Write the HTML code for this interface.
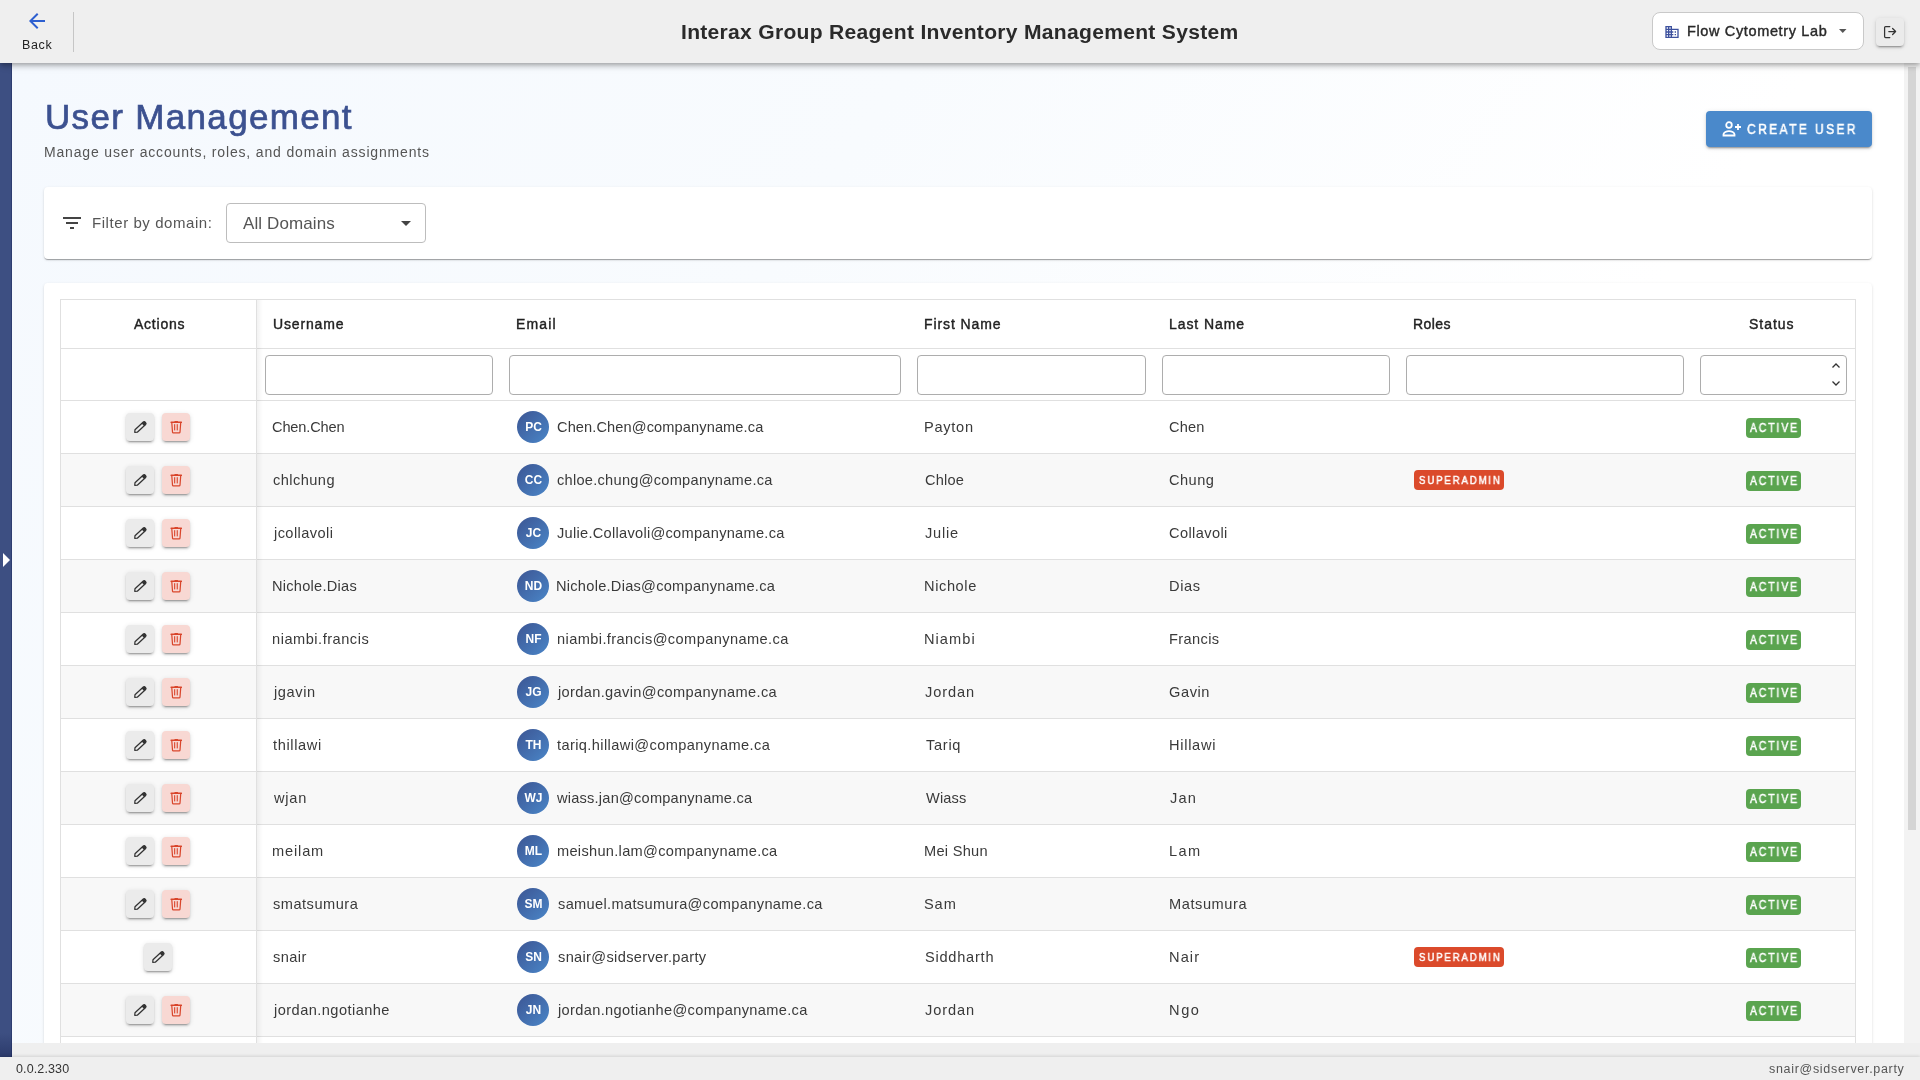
<!DOCTYPE html>
<html><head><meta charset="utf-8"><title>User Management</title>
<style>
*{box-sizing:border-box;margin:0;padding:0}
html,body{width:1920px;height:1080px;overflow:hidden;background:#efefef;font-family:"Liberation Sans",sans-serif;color:#333}
.a{position:absolute}
.t{white-space:nowrap;line-height:1;will-change:transform}
.hdr{left:0;top:0;width:1920px;height:63px;background:#efefef;box-shadow:0 2px 4px -1px rgba(0,0,0,.2),0 4px 5px 0 rgba(0,0,0,.14),0 1px 10px 0 rgba(0,0,0,.12);z-index:5}
.side{left:0;top:63px;width:12px;height:994px;background:linear-gradient(180deg,#3d4f82 0,#3d4f82 970px,#2c3b6c 994px);box-shadow:inset -1px 0 0 rgba(20,30,80,.35);z-index:4}
.content{left:12px;top:63px;width:1892px;height:980px;background:linear-gradient(125deg,#f5f9fe 0%,#f8fbfe 35%,#ffffff 70%,#ffffff 100%)}
.track{left:1904px;top:63px;width:16px;height:980px;background:#f3f3f3}
.thumb{left:1908px;top:67px;width:8px;height:763px;background:#d5d5d5;border-radius:0}
.footer{left:0;top:1057px;width:1920px;height:23px;background:#efefef;box-shadow:0 -1px 3px rgba(0,0,0,.12);z-index:6}
.card{background:#fff;border-radius:4px;box-shadow:0 2px 1px -1px rgba(0,0,0,.2),0 1px 1px 0 rgba(0,0,0,.14),0 1px 3px 0 rgba(0,0,0,.12)}
.hline{height:1px;background:#e0e0e0}
.vline{width:1px;background:#e0e0e0}
.inp{border:1px solid #adadad;border-radius:4px;background:#fff;height:40px;top:355px}
.btn{width:28px;height:28px;border-radius:4px;box-shadow:0 3px 1px -2px rgba(0,0,0,.2),0 2px 2px 0 rgba(0,0,0,.14),0 1px 5px 0 rgba(0,0,0,.12)}.btn>svg{position:absolute;left:0;top:0}
.edit{background:#ebebeb}
.del{background:#f8d8d3}
.av{width:32px;height:32px;border-radius:50%;background:linear-gradient(135deg,#3c5593 0%,#4a86c8 100%)}
.badge{height:20px;border-radius:4px}
.sa{background:#db4a2b;width:90px}
.ac{background:#5aa44f;width:55px}
</style></head><body>

<div class="a hdr">
<svg class="a" style="left:24.7px;top:9px" width="24" height="24" viewBox="0 0 24 24"><path fill="#2d5fd0" d="M20 11H7.83l5.59-5.59L12 4l-8 8 8 8 1.41-1.41L7.83 13H20v-2z"/></svg>
<div id="back" class="a t" style="left:21.76px;top:38.90px;font-size:12.5px;font-weight:normal;color:#222;letter-spacing:0.649px;">Back</div>
<div class="a" style="left:73px;top:12px;width:1px;height:40px;background:#c6c6c6"></div>
<div id="title" class="a t" style="left:681.28px;top:22.82px;font-size:19.5px;font-weight:bold;color:#2a2a2a;letter-spacing:0.274px;transform:scaleX(1.08);transform-origin:0 0">Interax Group Reagent Inventory Management System</div>
<div class="a" style="left:1652px;top:12px;width:212px;height:38px;background:#fff;border:1px solid #c9c9c9;border-radius:8px"></div>
<svg class="a" style="left:1664px;top:24px" width="16" height="16" viewBox="0 0 24 24"><path fill="#3d519e" d="M12 7V3H2v18h20V7H12zM6 19H4v-2h2v2zm0-4H4v-2h2v2zm0-4H4V9h2v2zm0-4H4V5h2v2zm4 12H8v-2h2v2zm0-4H8v-2h2v2zm0-4H8V9h2v2zm0-4H8V5h2v2zm10 12h-8v-2h2v-2h-2v-2h2v-2h-2V9h8v10zm-2-8h-2v2h2v-2zm0 4h-2v2h2v-2z"/></svg>
<div id="lab" class="a t" style="left:1687.18px;top:24.10px;font-size:14.5px;font-weight:normal;color:#2a2a2a;letter-spacing:0.638px;-webkit-text-stroke:.4px #2a2a2a">Flow Cytometry Lab</div>
<svg class="a" style="left:1839px;top:29px" width="8" height="5" viewBox="0 0 8 5"><path fill="#555" d="M0 0h7.5L3.75 4z"/></svg>
<div class="a btn edit" style="left:1876px;top:18px;background:#ebebeb"><svg width="28" height="28" viewBox="0 0 28 28"><path fill="none" stroke="#333" stroke-width="1.25" stroke-linecap="round" stroke-linejoin="round" d="M13.8 8.6H9.6Q8.6 8.6 8.6 9.6V18.6Q8.6 19.6 9.6 19.6H13.8M12.8 13.5H19.6M16.6 10.5L19.6 13.5L16.6 16.5"/></svg></div>
</div>
<div class="a side"><svg class="a" style="left:3px;top:490px" width="7" height="14" viewBox="0 0 7 14"><path fill="#fff" d="M0 0l7 7-7 7z"/></svg></div>
<div class="a content"></div>
<div class="a track"></div><div class="a thumb"></div>
<div id="h1" class="a t" style="left:44.65px;top:99.01px;font-size:35px;font-weight:normal;color:#3c5190;letter-spacing:1.329px;-webkit-text-stroke:.7px #3c5190">User Management</div>
<div id="sub" class="a t" style="left:44.30px;top:144.72px;font-size:14px;font-weight:normal;color:#555;letter-spacing:0.837px;">Manage user accounts, roles, and domain assignments</div>
<div class="a" style="left:1706px;top:111px;width:166px;height:36px;background:#4a89cb;border-radius:4px;box-shadow:0 3px 1px -2px rgba(0,0,0,.2),0 2px 2px 0 rgba(0,0,0,.14),0 1px 5px 0 rgba(0,0,0,.12)"></div>
<svg class="a" style="left:1721px;top:120px" width="22" height="18" viewBox="0 0 22 18"><circle cx="8" cy="5" r="2.8" fill="none" stroke="#fff" stroke-width="1.8"/><path d="M2.5 15.5v-1.2c0-1.8 3-3.2 5.5-3.2s5.5 1.4 5.5 3.2v1.2z" fill="none" stroke="#fff" stroke-width="1.8"/><path d="M17 4v6M14 7h6" stroke="#fff" stroke-width="1.8"/></svg>
<div id="create" class="a t" style="left:1746.57px;top:121.72px;font-size:14px;font-weight:normal;color:#fff;letter-spacing:2.767px;-webkit-text-stroke:.5px #fff;transform:scaleX(.86);transform-origin:0 0">CREATE USER</div>
<div class="a card" style="left:44px;top:187px;width:1828px;height:72px"></div>
<svg class="a" style="left:60px;top:211px" width="24" height="24" viewBox="0 0 24 24"><path fill="#444" d="M10 18h4v-2h-4v2zM3 6v2h18V6H3zm3 7h12v-2H6v2z"/></svg>
<div id="filt" class="a t" style="left:91.68px;top:214.91px;font-size:15px;font-weight:normal;color:#555;letter-spacing:0.563px;">Filter by domain:</div>
<div class="a" style="left:226px;top:203px;width:200px;height:40px;border:1px solid #bdbdbd;border-radius:4px;background:#fff"></div>
<div id="alld" class="a t" style="left:242.73px;top:214.81px;font-size:17px;font-weight:normal;color:#555;letter-spacing:0.101px;">All Domains</div>
<svg class="a" style="left:400.5px;top:221px" width="10" height="6" viewBox="0 0 10 6"><path fill="#444" d="M0 0h10L5 5z"/></svg>
<div class="a" style="left:0;top:0;width:1904px;height:1043px;overflow:hidden;z-index:1">
<div class="a card" style="left:44px;top:283px;width:1828px;height:800px"></div>
<div class="a" style="left:60px;top:299px;width:1796px;height:800px;border:1px solid #e0e0e0;border-bottom:none;background:#fff"></div>
<div class="a" style="left:61px;top:401px;width:1794px;height:52px;background:#fff"></div>
<div class="a" style="left:61px;top:454px;width:1794px;height:52px;background:#f8f8f8"></div>
<div class="a" style="left:61px;top:507px;width:1794px;height:52px;background:#fff"></div>
<div class="a" style="left:61px;top:560px;width:1794px;height:52px;background:#f8f8f8"></div>
<div class="a" style="left:61px;top:613px;width:1794px;height:52px;background:#fff"></div>
<div class="a" style="left:61px;top:666px;width:1794px;height:52px;background:#f8f8f8"></div>
<div class="a" style="left:61px;top:719px;width:1794px;height:52px;background:#fff"></div>
<div class="a" style="left:61px;top:772px;width:1794px;height:52px;background:#f8f8f8"></div>
<div class="a" style="left:61px;top:825px;width:1794px;height:52px;background:#fff"></div>
<div class="a" style="left:61px;top:878px;width:1794px;height:52px;background:#f8f8f8"></div>
<div class="a" style="left:61px;top:931px;width:1794px;height:52px;background:#fff"></div>
<div class="a" style="left:61px;top:984px;width:1794px;height:52px;background:#f8f8f8"></div>
<div class="a" style="left:61px;top:1037px;width:1794px;height:52px;background:#fff"></div>
<div class="a hline" style="left:60px;top:348px;width:1796px"></div>
<div class="a hline" style="left:60px;top:400px;width:1796px"></div>
<div class="a hline" style="left:60px;top:453px;width:1796px"></div>
<div class="a hline" style="left:60px;top:506px;width:1796px"></div>
<div class="a hline" style="left:60px;top:559px;width:1796px"></div>
<div class="a hline" style="left:60px;top:612px;width:1796px"></div>
<div class="a hline" style="left:60px;top:665px;width:1796px"></div>
<div class="a hline" style="left:60px;top:718px;width:1796px"></div>
<div class="a hline" style="left:60px;top:771px;width:1796px"></div>
<div class="a hline" style="left:60px;top:824px;width:1796px"></div>
<div class="a hline" style="left:60px;top:877px;width:1796px"></div>
<div class="a hline" style="left:60px;top:930px;width:1796px"></div>
<div class="a hline" style="left:60px;top:983px;width:1796px"></div>
<div class="a hline" style="left:60px;top:1036px;width:1796px"></div>
<div class="a hline" style="left:60px;top:1089px;width:1796px"></div>
<div class="a vline" style="left:256px;top:299px;height:800px"></div>
<div class="a" style="left:257px;top:300px;width:6px;height:800px;background:linear-gradient(90deg,rgba(0,0,0,.05),rgba(0,0,0,0))"></div>
<div id="hact" class="a t" style="left:133.83px;top:317.01px;font-size:14px;font-weight:normal;color:#222;letter-spacing:0.764px;-webkit-text-stroke:.4px #222">Actions</div>
<div id="huser" class="a t" style="left:272.69px;top:317.01px;font-size:14px;font-weight:normal;color:#222;letter-spacing:0.841px;-webkit-text-stroke:.4px #222">Username</div>
<div id="hemail" class="a t" style="left:516.05px;top:317.01px;font-size:14px;font-weight:normal;color:#222;letter-spacing:1.169px;-webkit-text-stroke:.4px #222">Email</div>
<div id="hfirst" class="a t" style="left:924.35px;top:317.01px;font-size:14px;font-weight:normal;color:#222;letter-spacing:0.904px;-webkit-text-stroke:.4px #222">First Name</div>
<div id="hlast" class="a t" style="left:1169.35px;top:317.01px;font-size:14px;font-weight:normal;color:#222;letter-spacing:0.927px;-webkit-text-stroke:.4px #222">Last Name</div>
<div id="hroles" class="a t" style="left:1413.43px;top:317.01px;font-size:14px;font-weight:normal;color:#222;letter-spacing:0.430px;-webkit-text-stroke:.4px #222">Roles</div>
<div id="hstatus" class="a t" style="left:1749.41px;top:317.01px;font-size:14px;font-weight:normal;color:#222;letter-spacing:0.965px;-webkit-text-stroke:.4px #222">Status</div>
<div class="a inp" style="left:265px;width:228px"></div>
<div class="a inp" style="left:509px;width:392px"></div>
<div class="a inp" style="left:917px;width:229px"></div>
<div class="a inp" style="left:1162px;width:228px"></div>
<div class="a inp" style="left:1406px;width:278px"></div>
<div class="a inp" style="left:1700px;width:147px"></div>
<svg class="a" style="left:1830px;top:359px" width="12" height="32" viewBox="0 0 12 32"><path d="M2.5 8.5l3.5-3.5 3.5 3.5M2.5 22.5l3.5 3.5 3.5-3.5" fill="none" stroke="#333" stroke-width="1.3"/></svg>
<div class="a btn edit" style="left:126px;top:413px"><svg width="28" height="28" viewBox="0 0 28 28"><g transform="translate(8.6,19.4) rotate(-43)"><path d="M0.2 0 L2.1 -1.7 H13.5 Q14.8 -1.7 14.8 0 Q14.8 1.7 13.5 1.7 H2.1 Z" fill="none" stroke="#333" stroke-width="1.25" stroke-linejoin="round"/><path d="M11.3 -1.7 H13.5 Q14.8 -1.7 14.8 0 Q14.8 1.7 13.5 1.7 H11.3 Z" fill="#333"/></g></svg></div>
<div class="a btn del" style="left:162px;top:413px"><svg width="28" height="28" viewBox="0 0 28 28"><rect x="8.5" y="8.5" width="11.5" height="1.6" rx=".4" fill="#d9452b"/><rect x="12.4" y="7.9" width="3.7" height="1.1" rx=".4" fill="#d9452b"/><path d="M9.8 9.9 L10.5 19.1 Q10.6 19.8 11.3 19.8 H17.2 Q17.9 19.8 18 19.1 L18.7 9.9" fill="none" stroke="#d9452b" stroke-width="1.2"/><rect x="12.1" y="11.2" width="1.1" height="6.2" fill="#d9452b"/><rect x="14.7" y="11.2" width="1.1" height="6.2" fill="#d9452b"/></svg></div>
<div id="u0" class="a t" style="left:272.42px;top:420.01px;font-size:14.6px;font-weight:normal;color:#3a3a3a;letter-spacing:-0.156px;">Chen.Chen</div>
<div class="a av" style="left:517px;top:411px"></div>
<div class="a t" style="left:517px;top:420.70px;width:32px;text-align:center;font-size:12px;font-weight:bold;color:#fff;letter-spacing:0;text-indent:1px">PC</div>
<div id="e0" class="a t" style="left:557.15px;top:420.01px;font-size:14.6px;font-weight:normal;color:#3a3a3a;letter-spacing:0.106px;">Chen.Chen@companyname.ca</div>
<div id="f0" class="a t" style="left:924.01px;top:420.01px;font-size:14.6px;font-weight:normal;color:#3a3a3a;letter-spacing:0.716px;">Payton</div>
<div id="l0" class="a t" style="left:1169.02px;top:420.01px;font-size:14.6px;font-weight:normal;color:#3a3a3a;letter-spacing:0.190px;">Chen</div>
<div class="a badge ac" style="left:1746px;top:418px"></div>
<div id="a0" class="a t" style="left:1749.77px;top:422.00px;font-size:12px;font-weight:normal;color:#fff;letter-spacing:2.278px;-webkit-text-stroke:.5px #fff;transform:scaleX(.86);transform-origin:0 0">ACTIVE</div>
<div class="a btn edit" style="left:126px;top:466px"><svg width="28" height="28" viewBox="0 0 28 28"><g transform="translate(8.6,19.4) rotate(-43)"><path d="M0.2 0 L2.1 -1.7 H13.5 Q14.8 -1.7 14.8 0 Q14.8 1.7 13.5 1.7 H2.1 Z" fill="none" stroke="#333" stroke-width="1.25" stroke-linejoin="round"/><path d="M11.3 -1.7 H13.5 Q14.8 -1.7 14.8 0 Q14.8 1.7 13.5 1.7 H11.3 Z" fill="#333"/></g></svg></div>
<div class="a btn del" style="left:162px;top:466px"><svg width="28" height="28" viewBox="0 0 28 28"><rect x="8.5" y="8.5" width="11.5" height="1.6" rx=".4" fill="#d9452b"/><rect x="12.4" y="7.9" width="3.7" height="1.1" rx=".4" fill="#d9452b"/><path d="M9.8 9.9 L10.5 19.1 Q10.6 19.8 11.3 19.8 H17.2 Q17.9 19.8 18 19.1 L18.7 9.9" fill="none" stroke="#d9452b" stroke-width="1.2"/><rect x="12.1" y="11.2" width="1.1" height="6.2" fill="#d9452b"/><rect x="14.7" y="11.2" width="1.1" height="6.2" fill="#d9452b"/></svg></div>
<div id="u1" class="a t" style="left:273.05px;top:473.01px;font-size:14.6px;font-weight:normal;color:#3a3a3a;letter-spacing:0.447px;">chlchung</div>
<div class="a av" style="left:517px;top:464px"></div>
<div class="a t" style="left:517px;top:473.70px;width:32px;text-align:center;font-size:12px;font-weight:bold;color:#fff;letter-spacing:0;text-indent:1px">CC</div>
<div id="e1" class="a t" style="left:557.49px;top:473.01px;font-size:14.6px;font-weight:normal;color:#3a3a3a;letter-spacing:0.269px;">chloe.chung@companyname.ca</div>
<div id="f1" class="a t" style="left:924.74px;top:473.01px;font-size:14.6px;font-weight:normal;color:#3a3a3a;letter-spacing:0.213px;">Chloe</div>
<div id="l1" class="a t" style="left:1169.03px;top:473.01px;font-size:14.6px;font-weight:normal;color:#3a3a3a;letter-spacing:0.469px;">Chung</div>
<div class="a badge sa" style="left:1414px;top:470px"></div>
<div id="s1" class="a t" style="left:1418.52px;top:475.01px;font-size:11px;font-weight:normal;color:#fff;letter-spacing:2.066px;-webkit-text-stroke:.5px #fff;transform:scaleX(.88);transform-origin:0 0">SUPERADMIN</div>
<div class="a badge ac" style="left:1746px;top:471px"></div>
<div id="a1" class="a t" style="left:1749.77px;top:475.00px;font-size:12px;font-weight:normal;color:#fff;letter-spacing:2.278px;-webkit-text-stroke:.5px #fff;transform:scaleX(.86);transform-origin:0 0">ACTIVE</div>
<div class="a btn edit" style="left:126px;top:519px"><svg width="28" height="28" viewBox="0 0 28 28"><g transform="translate(8.6,19.4) rotate(-43)"><path d="M0.2 0 L2.1 -1.7 H13.5 Q14.8 -1.7 14.8 0 Q14.8 1.7 13.5 1.7 H2.1 Z" fill="none" stroke="#333" stroke-width="1.25" stroke-linejoin="round"/><path d="M11.3 -1.7 H13.5 Q14.8 -1.7 14.8 0 Q14.8 1.7 13.5 1.7 H11.3 Z" fill="#333"/></g></svg></div>
<div class="a btn del" style="left:162px;top:519px"><svg width="28" height="28" viewBox="0 0 28 28"><rect x="8.5" y="8.5" width="11.5" height="1.6" rx=".4" fill="#d9452b"/><rect x="12.4" y="7.9" width="3.7" height="1.1" rx=".4" fill="#d9452b"/><path d="M9.8 9.9 L10.5 19.1 Q10.6 19.8 11.3 19.8 H17.2 Q17.9 19.8 18 19.1 L18.7 9.9" fill="none" stroke="#d9452b" stroke-width="1.2"/><rect x="12.1" y="11.2" width="1.1" height="6.2" fill="#d9452b"/><rect x="14.7" y="11.2" width="1.1" height="6.2" fill="#d9452b"/></svg></div>
<div id="u2" class="a t" style="left:274.02px;top:526.01px;font-size:14.6px;font-weight:normal;color:#3a3a3a;letter-spacing:0.414px;">jcollavoli</div>
<div class="a av" style="left:517px;top:517px"></div>
<div class="a t" style="left:517px;top:526.70px;width:32px;text-align:center;font-size:12px;font-weight:bold;color:#fff;letter-spacing:0;text-indent:1px">JC</div>
<div id="e2" class="a t" style="left:557.31px;top:526.01px;font-size:14.6px;font-weight:normal;color:#3a3a3a;letter-spacing:0.281px;">Julie.Collavoli@companyname.ca</div>
<div id="f2" class="a t" style="left:924.84px;top:526.01px;font-size:14.6px;font-weight:normal;color:#3a3a3a;letter-spacing:0.773px;">Julie</div>
<div id="l2" class="a t" style="left:1169.02px;top:526.01px;font-size:14.6px;font-weight:normal;color:#3a3a3a;letter-spacing:0.388px;">Collavoli</div>
<div class="a badge ac" style="left:1746px;top:524px"></div>
<div id="a2" class="a t" style="left:1749.77px;top:528.00px;font-size:12px;font-weight:normal;color:#fff;letter-spacing:2.278px;-webkit-text-stroke:.5px #fff;transform:scaleX(.86);transform-origin:0 0">ACTIVE</div>
<div class="a btn edit" style="left:126px;top:572px"><svg width="28" height="28" viewBox="0 0 28 28"><g transform="translate(8.6,19.4) rotate(-43)"><path d="M0.2 0 L2.1 -1.7 H13.5 Q14.8 -1.7 14.8 0 Q14.8 1.7 13.5 1.7 H2.1 Z" fill="none" stroke="#333" stroke-width="1.25" stroke-linejoin="round"/><path d="M11.3 -1.7 H13.5 Q14.8 -1.7 14.8 0 Q14.8 1.7 13.5 1.7 H11.3 Z" fill="#333"/></g></svg></div>
<div class="a btn del" style="left:162px;top:572px"><svg width="28" height="28" viewBox="0 0 28 28"><rect x="8.5" y="8.5" width="11.5" height="1.6" rx=".4" fill="#d9452b"/><rect x="12.4" y="7.9" width="3.7" height="1.1" rx=".4" fill="#d9452b"/><path d="M9.8 9.9 L10.5 19.1 Q10.6 19.8 11.3 19.8 H17.2 Q17.9 19.8 18 19.1 L18.7 9.9" fill="none" stroke="#d9452b" stroke-width="1.2"/><rect x="12.1" y="11.2" width="1.1" height="6.2" fill="#d9452b"/><rect x="14.7" y="11.2" width="1.1" height="6.2" fill="#d9452b"/></svg></div>
<div id="u3" class="a t" style="left:271.60px;top:579.01px;font-size:14.6px;font-weight:normal;color:#3a3a3a;letter-spacing:0.261px;">Nichole.Dias</div>
<div class="a av" style="left:517px;top:570px"></div>
<div class="a t" style="left:517px;top:579.70px;width:32px;text-align:center;font-size:12px;font-weight:bold;color:#fff;letter-spacing:0;text-indent:1px">ND</div>
<div id="e3" class="a t" style="left:556.22px;top:579.01px;font-size:14.6px;font-weight:normal;color:#3a3a3a;letter-spacing:0.265px;">Nichole.Dias@companyname.ca</div>
<div id="f3" class="a t" style="left:924.49px;top:579.01px;font-size:14.6px;font-weight:normal;color:#3a3a3a;letter-spacing:0.606px;">Nichole</div>
<div id="l3" class="a t" style="left:1169.17px;top:579.01px;font-size:14.6px;font-weight:normal;color:#3a3a3a;letter-spacing:0.600px;">Dias</div>
<div class="a badge ac" style="left:1746px;top:577px"></div>
<div id="a3" class="a t" style="left:1749.77px;top:581.00px;font-size:12px;font-weight:normal;color:#fff;letter-spacing:2.278px;-webkit-text-stroke:.5px #fff;transform:scaleX(.86);transform-origin:0 0">ACTIVE</div>
<div class="a btn edit" style="left:126px;top:625px"><svg width="28" height="28" viewBox="0 0 28 28"><g transform="translate(8.6,19.4) rotate(-43)"><path d="M0.2 0 L2.1 -1.7 H13.5 Q14.8 -1.7 14.8 0 Q14.8 1.7 13.5 1.7 H2.1 Z" fill="none" stroke="#333" stroke-width="1.25" stroke-linejoin="round"/><path d="M11.3 -1.7 H13.5 Q14.8 -1.7 14.8 0 Q14.8 1.7 13.5 1.7 H11.3 Z" fill="#333"/></g></svg></div>
<div class="a btn del" style="left:162px;top:625px"><svg width="28" height="28" viewBox="0 0 28 28"><rect x="8.5" y="8.5" width="11.5" height="1.6" rx=".4" fill="#d9452b"/><rect x="12.4" y="7.9" width="3.7" height="1.1" rx=".4" fill="#d9452b"/><path d="M9.8 9.9 L10.5 19.1 Q10.6 19.8 11.3 19.8 H17.2 Q17.9 19.8 18 19.1 L18.7 9.9" fill="none" stroke="#d9452b" stroke-width="1.2"/><rect x="12.1" y="11.2" width="1.1" height="6.2" fill="#d9452b"/><rect x="14.7" y="11.2" width="1.1" height="6.2" fill="#d9452b"/></svg></div>
<div id="u4" class="a t" style="left:272.23px;top:632.01px;font-size:14.6px;font-weight:normal;color:#3a3a3a;letter-spacing:0.512px;">niambi.francis</div>
<div class="a av" style="left:517px;top:623px"></div>
<div class="a t" style="left:517px;top:632.70px;width:32px;text-align:center;font-size:12px;font-weight:bold;color:#fff;letter-spacing:0;text-indent:1px">NF</div>
<div id="e4" class="a t" style="left:557.03px;top:632.01px;font-size:14.6px;font-weight:normal;color:#3a3a3a;letter-spacing:0.401px;">niambi.francis@companyname.ca</div>
<div id="f4" class="a t" style="left:924.01px;top:632.01px;font-size:14.6px;font-weight:normal;color:#3a3a3a;letter-spacing:1.043px;">Niambi</div>
<div id="l4" class="a t" style="left:1169.21px;top:632.01px;font-size:14.6px;font-weight:normal;color:#3a3a3a;letter-spacing:0.371px;">Francis</div>
<div class="a badge ac" style="left:1746px;top:630px"></div>
<div id="a4" class="a t" style="left:1749.77px;top:634.00px;font-size:12px;font-weight:normal;color:#fff;letter-spacing:2.278px;-webkit-text-stroke:.5px #fff;transform:scaleX(.86);transform-origin:0 0">ACTIVE</div>
<div class="a btn edit" style="left:126px;top:678px"><svg width="28" height="28" viewBox="0 0 28 28"><g transform="translate(8.6,19.4) rotate(-43)"><path d="M0.2 0 L2.1 -1.7 H13.5 Q14.8 -1.7 14.8 0 Q14.8 1.7 13.5 1.7 H2.1 Z" fill="none" stroke="#333" stroke-width="1.25" stroke-linejoin="round"/><path d="M11.3 -1.7 H13.5 Q14.8 -1.7 14.8 0 Q14.8 1.7 13.5 1.7 H11.3 Z" fill="#333"/></g></svg></div>
<div class="a btn del" style="left:162px;top:678px"><svg width="28" height="28" viewBox="0 0 28 28"><rect x="8.5" y="8.5" width="11.5" height="1.6" rx=".4" fill="#d9452b"/><rect x="12.4" y="7.9" width="3.7" height="1.1" rx=".4" fill="#d9452b"/><path d="M9.8 9.9 L10.5 19.1 Q10.6 19.8 11.3 19.8 H17.2 Q17.9 19.8 18 19.1 L18.7 9.9" fill="none" stroke="#d9452b" stroke-width="1.2"/><rect x="12.1" y="11.2" width="1.1" height="6.2" fill="#d9452b"/><rect x="14.7" y="11.2" width="1.1" height="6.2" fill="#d9452b"/></svg></div>
<div id="u5" class="a t" style="left:274.09px;top:685.01px;font-size:14.6px;font-weight:normal;color:#3a3a3a;letter-spacing:0.603px;">jgavin</div>
<div class="a av" style="left:517px;top:676px"></div>
<div class="a t" style="left:517px;top:685.70px;width:32px;text-align:center;font-size:12px;font-weight:bold;color:#fff;letter-spacing:0;text-indent:1px">JG</div>
<div id="e5" class="a t" style="left:557.71px;top:685.01px;font-size:14.6px;font-weight:normal;color:#3a3a3a;letter-spacing:0.353px;">jordan.gavin@companyname.ca</div>
<div id="f5" class="a t" style="left:924.80px;top:685.01px;font-size:14.6px;font-weight:normal;color:#3a3a3a;letter-spacing:0.899px;">Jordan</div>
<div id="l5" class="a t" style="left:1168.81px;top:685.01px;font-size:14.6px;font-weight:normal;color:#3a3a3a;letter-spacing:0.591px;">Gavin</div>
<div class="a badge ac" style="left:1746px;top:683px"></div>
<div id="a5" class="a t" style="left:1749.77px;top:687.00px;font-size:12px;font-weight:normal;color:#fff;letter-spacing:2.278px;-webkit-text-stroke:.5px #fff;transform:scaleX(.86);transform-origin:0 0">ACTIVE</div>
<div class="a btn edit" style="left:126px;top:731px"><svg width="28" height="28" viewBox="0 0 28 28"><g transform="translate(8.6,19.4) rotate(-43)"><path d="M0.2 0 L2.1 -1.7 H13.5 Q14.8 -1.7 14.8 0 Q14.8 1.7 13.5 1.7 H2.1 Z" fill="none" stroke="#333" stroke-width="1.25" stroke-linejoin="round"/><path d="M11.3 -1.7 H13.5 Q14.8 -1.7 14.8 0 Q14.8 1.7 13.5 1.7 H11.3 Z" fill="#333"/></g></svg></div>
<div class="a btn del" style="left:162px;top:731px"><svg width="28" height="28" viewBox="0 0 28 28"><rect x="8.5" y="8.5" width="11.5" height="1.6" rx=".4" fill="#d9452b"/><rect x="12.4" y="7.9" width="3.7" height="1.1" rx=".4" fill="#d9452b"/><path d="M9.8 9.9 L10.5 19.1 Q10.6 19.8 11.3 19.8 H17.2 Q17.9 19.8 18 19.1 L18.7 9.9" fill="none" stroke="#d9452b" stroke-width="1.2"/><rect x="12.1" y="11.2" width="1.1" height="6.2" fill="#d9452b"/><rect x="14.7" y="11.2" width="1.1" height="6.2" fill="#d9452b"/></svg></div>
<div id="u6" class="a t" style="left:273.17px;top:738.01px;font-size:14.6px;font-weight:normal;color:#3a3a3a;letter-spacing:0.635px;">thillawi</div>
<div class="a av" style="left:517px;top:729px"></div>
<div class="a t" style="left:517px;top:738.70px;width:32px;text-align:center;font-size:12px;font-weight:bold;color:#fff;letter-spacing:0;text-indent:1px">TH</div>
<div id="e6" class="a t" style="left:557.44px;top:738.01px;font-size:14.6px;font-weight:normal;color:#3a3a3a;letter-spacing:0.396px;">tariq.hillawi@companyname.ca</div>
<div id="f6" class="a t" style="left:925.74px;top:738.01px;font-size:14.6px;font-weight:normal;color:#3a3a3a;letter-spacing:0.714px;">Tariq</div>
<div id="l6" class="a t" style="left:1169.21px;top:738.01px;font-size:14.6px;font-weight:normal;color:#3a3a3a;letter-spacing:0.708px;">Hillawi</div>
<div class="a badge ac" style="left:1746px;top:736px"></div>
<div id="a6" class="a t" style="left:1749.77px;top:740.00px;font-size:12px;font-weight:normal;color:#fff;letter-spacing:2.278px;-webkit-text-stroke:.5px #fff;transform:scaleX(.86);transform-origin:0 0">ACTIVE</div>
<div class="a btn edit" style="left:126px;top:784px"><svg width="28" height="28" viewBox="0 0 28 28"><g transform="translate(8.6,19.4) rotate(-43)"><path d="M0.2 0 L2.1 -1.7 H13.5 Q14.8 -1.7 14.8 0 Q14.8 1.7 13.5 1.7 H2.1 Z" fill="none" stroke="#333" stroke-width="1.25" stroke-linejoin="round"/><path d="M11.3 -1.7 H13.5 Q14.8 -1.7 14.8 0 Q14.8 1.7 13.5 1.7 H11.3 Z" fill="#333"/></g></svg></div>
<div class="a btn del" style="left:162px;top:784px"><svg width="28" height="28" viewBox="0 0 28 28"><rect x="8.5" y="8.5" width="11.5" height="1.6" rx=".4" fill="#d9452b"/><rect x="12.4" y="7.9" width="3.7" height="1.1" rx=".4" fill="#d9452b"/><path d="M9.8 9.9 L10.5 19.1 Q10.6 19.8 11.3 19.8 H17.2 Q17.9 19.8 18 19.1 L18.7 9.9" fill="none" stroke="#d9452b" stroke-width="1.2"/><rect x="12.1" y="11.2" width="1.1" height="6.2" fill="#d9452b"/><rect x="14.7" y="11.2" width="1.1" height="6.2" fill="#d9452b"/></svg></div>
<div id="u7" class="a t" style="left:273.51px;top:791.01px;font-size:14.6px;font-weight:normal;color:#3a3a3a;letter-spacing:0.771px;">wjan</div>
<div class="a av" style="left:517px;top:782px"></div>
<div class="a t" style="left:517px;top:791.70px;width:32px;text-align:center;font-size:12px;font-weight:bold;color:#fff;letter-spacing:0;text-indent:1px">WJ</div>
<div id="e7" class="a t" style="left:557.24px;top:791.01px;font-size:14.6px;font-weight:normal;color:#3a3a3a;letter-spacing:0.220px;">wiass.jan@companyname.ca</div>
<div id="f7" class="a t" style="left:925.55px;top:791.01px;font-size:14.6px;font-weight:normal;color:#3a3a3a;letter-spacing:0.137px;">Wiass</div>
<div id="l7" class="a t" style="left:1169.98px;top:791.01px;font-size:14.6px;font-weight:normal;color:#3a3a3a;letter-spacing:1.152px;">Jan</div>
<div class="a badge ac" style="left:1746px;top:789px"></div>
<div id="a7" class="a t" style="left:1749.77px;top:793.00px;font-size:12px;font-weight:normal;color:#fff;letter-spacing:2.278px;-webkit-text-stroke:.5px #fff;transform:scaleX(.86);transform-origin:0 0">ACTIVE</div>
<div class="a btn edit" style="left:126px;top:837px"><svg width="28" height="28" viewBox="0 0 28 28"><g transform="translate(8.6,19.4) rotate(-43)"><path d="M0.2 0 L2.1 -1.7 H13.5 Q14.8 -1.7 14.8 0 Q14.8 1.7 13.5 1.7 H2.1 Z" fill="none" stroke="#333" stroke-width="1.25" stroke-linejoin="round"/><path d="M11.3 -1.7 H13.5 Q14.8 -1.7 14.8 0 Q14.8 1.7 13.5 1.7 H11.3 Z" fill="#333"/></g></svg></div>
<div class="a btn del" style="left:162px;top:837px"><svg width="28" height="28" viewBox="0 0 28 28"><rect x="8.5" y="8.5" width="11.5" height="1.6" rx=".4" fill="#d9452b"/><rect x="12.4" y="7.9" width="3.7" height="1.1" rx=".4" fill="#d9452b"/><path d="M9.8 9.9 L10.5 19.1 Q10.6 19.8 11.3 19.8 H17.2 Q17.9 19.8 18 19.1 L18.7 9.9" fill="none" stroke="#d9452b" stroke-width="1.2"/><rect x="12.1" y="11.2" width="1.1" height="6.2" fill="#d9452b"/><rect x="14.7" y="11.2" width="1.1" height="6.2" fill="#d9452b"/></svg></div>
<div id="u8" class="a t" style="left:272.23px;top:844.01px;font-size:14.6px;font-weight:normal;color:#3a3a3a;letter-spacing:0.844px;">meilam</div>
<div class="a av" style="left:517px;top:835px"></div>
<div class="a t" style="left:517px;top:844.70px;width:32px;text-align:center;font-size:12px;font-weight:bold;color:#fff;letter-spacing:0;text-indent:1px">ML</div>
<div id="e8" class="a t" style="left:557.03px;top:844.01px;font-size:14.6px;font-weight:normal;color:#3a3a3a;letter-spacing:0.300px;">meishun.lam@companyname.ca</div>
<div id="f8" class="a t" style="left:924.01px;top:844.01px;font-size:14.6px;font-weight:normal;color:#3a3a3a;letter-spacing:0.281px;">Mei Shun</div>
<div id="l8" class="a t" style="left:1169.21px;top:844.01px;font-size:14.6px;font-weight:normal;color:#3a3a3a;letter-spacing:1.342px;">Lam</div>
<div class="a badge ac" style="left:1746px;top:842px"></div>
<div id="a8" class="a t" style="left:1749.77px;top:846.00px;font-size:12px;font-weight:normal;color:#fff;letter-spacing:2.278px;-webkit-text-stroke:.5px #fff;transform:scaleX(.86);transform-origin:0 0">ACTIVE</div>
<div class="a btn edit" style="left:126px;top:890px"><svg width="28" height="28" viewBox="0 0 28 28"><g transform="translate(8.6,19.4) rotate(-43)"><path d="M0.2 0 L2.1 -1.7 H13.5 Q14.8 -1.7 14.8 0 Q14.8 1.7 13.5 1.7 H2.1 Z" fill="none" stroke="#333" stroke-width="1.25" stroke-linejoin="round"/><path d="M11.3 -1.7 H13.5 Q14.8 -1.7 14.8 0 Q14.8 1.7 13.5 1.7 H11.3 Z" fill="#333"/></g></svg></div>
<div class="a btn del" style="left:162px;top:890px"><svg width="28" height="28" viewBox="0 0 28 28"><rect x="8.5" y="8.5" width="11.5" height="1.6" rx=".4" fill="#d9452b"/><rect x="12.4" y="7.9" width="3.7" height="1.1" rx=".4" fill="#d9452b"/><path d="M9.8 9.9 L10.5 19.1 Q10.6 19.8 11.3 19.8 H17.2 Q17.9 19.8 18 19.1 L18.7 9.9" fill="none" stroke="#d9452b" stroke-width="1.2"/><rect x="12.1" y="11.2" width="1.1" height="6.2" fill="#d9452b"/><rect x="14.7" y="11.2" width="1.1" height="6.2" fill="#d9452b"/></svg></div>
<div id="u9" class="a t" style="left:273.02px;top:897.01px;font-size:14.6px;font-weight:normal;color:#3a3a3a;letter-spacing:0.499px;">smatsumura</div>
<div class="a av" style="left:517px;top:888px"></div>
<div class="a t" style="left:517px;top:897.70px;width:32px;text-align:center;font-size:12px;font-weight:bold;color:#fff;letter-spacing:0;text-indent:1px">SM</div>
<div id="e9" class="a t" style="left:557.59px;top:897.01px;font-size:14.6px;font-weight:normal;color:#3a3a3a;letter-spacing:0.344px;">samuel.matsumura@companyname.ca</div>
<div id="f9" class="a t" style="left:924.49px;top:897.01px;font-size:14.6px;font-weight:normal;color:#3a3a3a;letter-spacing:0.889px;">Sam</div>
<div id="l9" class="a t" style="left:1169.17px;top:897.01px;font-size:14.6px;font-weight:normal;color:#3a3a3a;letter-spacing:0.576px;">Matsumura</div>
<div class="a badge ac" style="left:1746px;top:895px"></div>
<div id="a9" class="a t" style="left:1749.77px;top:899.00px;font-size:12px;font-weight:normal;color:#fff;letter-spacing:2.278px;-webkit-text-stroke:.5px #fff;transform:scaleX(.86);transform-origin:0 0">ACTIVE</div>
<div class="a btn edit" style="left:144px;top:943px"><svg width="28" height="28" viewBox="0 0 28 28"><g transform="translate(8.6,19.4) rotate(-43)"><path d="M0.2 0 L2.1 -1.7 H13.5 Q14.8 -1.7 14.8 0 Q14.8 1.7 13.5 1.7 H2.1 Z" fill="none" stroke="#333" stroke-width="1.25" stroke-linejoin="round"/><path d="M11.3 -1.7 H13.5 Q14.8 -1.7 14.8 0 Q14.8 1.7 13.5 1.7 H11.3 Z" fill="#333"/></g></svg></div>
<div id="u10" class="a t" style="left:273.02px;top:950.01px;font-size:14.6px;font-weight:normal;color:#3a3a3a;letter-spacing:0.401px;">snair</div>
<div class="a av" style="left:517px;top:941px"></div>
<div class="a t" style="left:517px;top:950.70px;width:32px;text-align:center;font-size:12px;font-weight:bold;color:#fff;letter-spacing:0;text-indent:1px">SN</div>
<div id="e10" class="a t" style="left:557.58px;top:950.01px;font-size:14.6px;font-weight:normal;color:#3a3a3a;letter-spacing:0.337px;">snair@sidserver.party</div>
<div id="f10" class="a t" style="left:924.52px;top:950.01px;font-size:14.6px;font-weight:normal;color:#3a3a3a;letter-spacing:0.755px;">Siddharth</div>
<div id="l10" class="a t" style="left:1169.21px;top:950.01px;font-size:14.6px;font-weight:normal;color:#3a3a3a;letter-spacing:1.095px;">Nair</div>
<div class="a badge sa" style="left:1414px;top:947px"></div>
<div id="s10" class="a t" style="left:1418.52px;top:952.01px;font-size:11px;font-weight:normal;color:#fff;letter-spacing:2.066px;-webkit-text-stroke:.5px #fff;transform:scaleX(.88);transform-origin:0 0">SUPERADMIN</div>
<div class="a badge ac" style="left:1746px;top:948px"></div>
<div id="a10" class="a t" style="left:1749.77px;top:952.00px;font-size:12px;font-weight:normal;color:#fff;letter-spacing:2.278px;-webkit-text-stroke:.5px #fff;transform:scaleX(.86);transform-origin:0 0">ACTIVE</div>
<div class="a btn edit" style="left:126px;top:996px"><svg width="28" height="28" viewBox="0 0 28 28"><g transform="translate(8.6,19.4) rotate(-43)"><path d="M0.2 0 L2.1 -1.7 H13.5 Q14.8 -1.7 14.8 0 Q14.8 1.7 13.5 1.7 H2.1 Z" fill="none" stroke="#333" stroke-width="1.25" stroke-linejoin="round"/><path d="M11.3 -1.7 H13.5 Q14.8 -1.7 14.8 0 Q14.8 1.7 13.5 1.7 H11.3 Z" fill="#333"/></g></svg></div>
<div class="a btn del" style="left:162px;top:996px"><svg width="28" height="28" viewBox="0 0 28 28"><rect x="8.5" y="8.5" width="11.5" height="1.6" rx=".4" fill="#d9452b"/><rect x="12.4" y="7.9" width="3.7" height="1.1" rx=".4" fill="#d9452b"/><path d="M9.8 9.9 L10.5 19.1 Q10.6 19.8 11.3 19.8 H17.2 Q17.9 19.8 18 19.1 L18.7 9.9" fill="none" stroke="#d9452b" stroke-width="1.2"/><rect x="12.1" y="11.2" width="1.1" height="6.2" fill="#d9452b"/><rect x="14.7" y="11.2" width="1.1" height="6.2" fill="#d9452b"/></svg></div>
<div id="u11" class="a t" style="left:274.09px;top:1003.01px;font-size:14.6px;font-weight:normal;color:#3a3a3a;letter-spacing:0.448px;">jordan.ngotianhe</div>
<div class="a av" style="left:517px;top:994px"></div>
<div class="a t" style="left:517px;top:1003.70px;width:32px;text-align:center;font-size:12px;font-weight:bold;color:#fff;letter-spacing:0;text-indent:1px">JN</div>
<div id="e11" class="a t" style="left:557.71px;top:1003.01px;font-size:14.6px;font-weight:normal;color:#3a3a3a;letter-spacing:0.355px;">jordan.ngotianhe@companyname.ca</div>
<div id="f11" class="a t" style="left:924.80px;top:1003.01px;font-size:14.6px;font-weight:normal;color:#3a3a3a;letter-spacing:0.899px;">Jordan</div>
<div id="l11" class="a t" style="left:1169.17px;top:1003.01px;font-size:14.6px;font-weight:normal;color:#3a3a3a;letter-spacing:1.603px;">Ngo</div>
<div class="a badge ac" style="left:1746px;top:1001px"></div>
<div id="a11" class="a t" style="left:1749.77px;top:1005.00px;font-size:12px;font-weight:normal;color:#fff;letter-spacing:2.278px;-webkit-text-stroke:.5px #fff;transform:scaleX(.86);transform-origin:0 0">ACTIVE</div>
</div>
<div class="a footer"></div>
<div style="position:absolute;left:0;top:0;z-index:7">
<div id="ver" class="a t" style="left:15.77px;top:1063.00px;font-size:12.5px;font-weight:normal;color:#333;letter-spacing:0.123px;">0.0.2.330</div>
<div id="mail" class="a t" style="left:1768.95px;top:1063.00px;font-size:12.5px;font-weight:normal;color:#555;letter-spacing:0.690px;">snair@sidserver.party</div>
</div>
</body></html>
